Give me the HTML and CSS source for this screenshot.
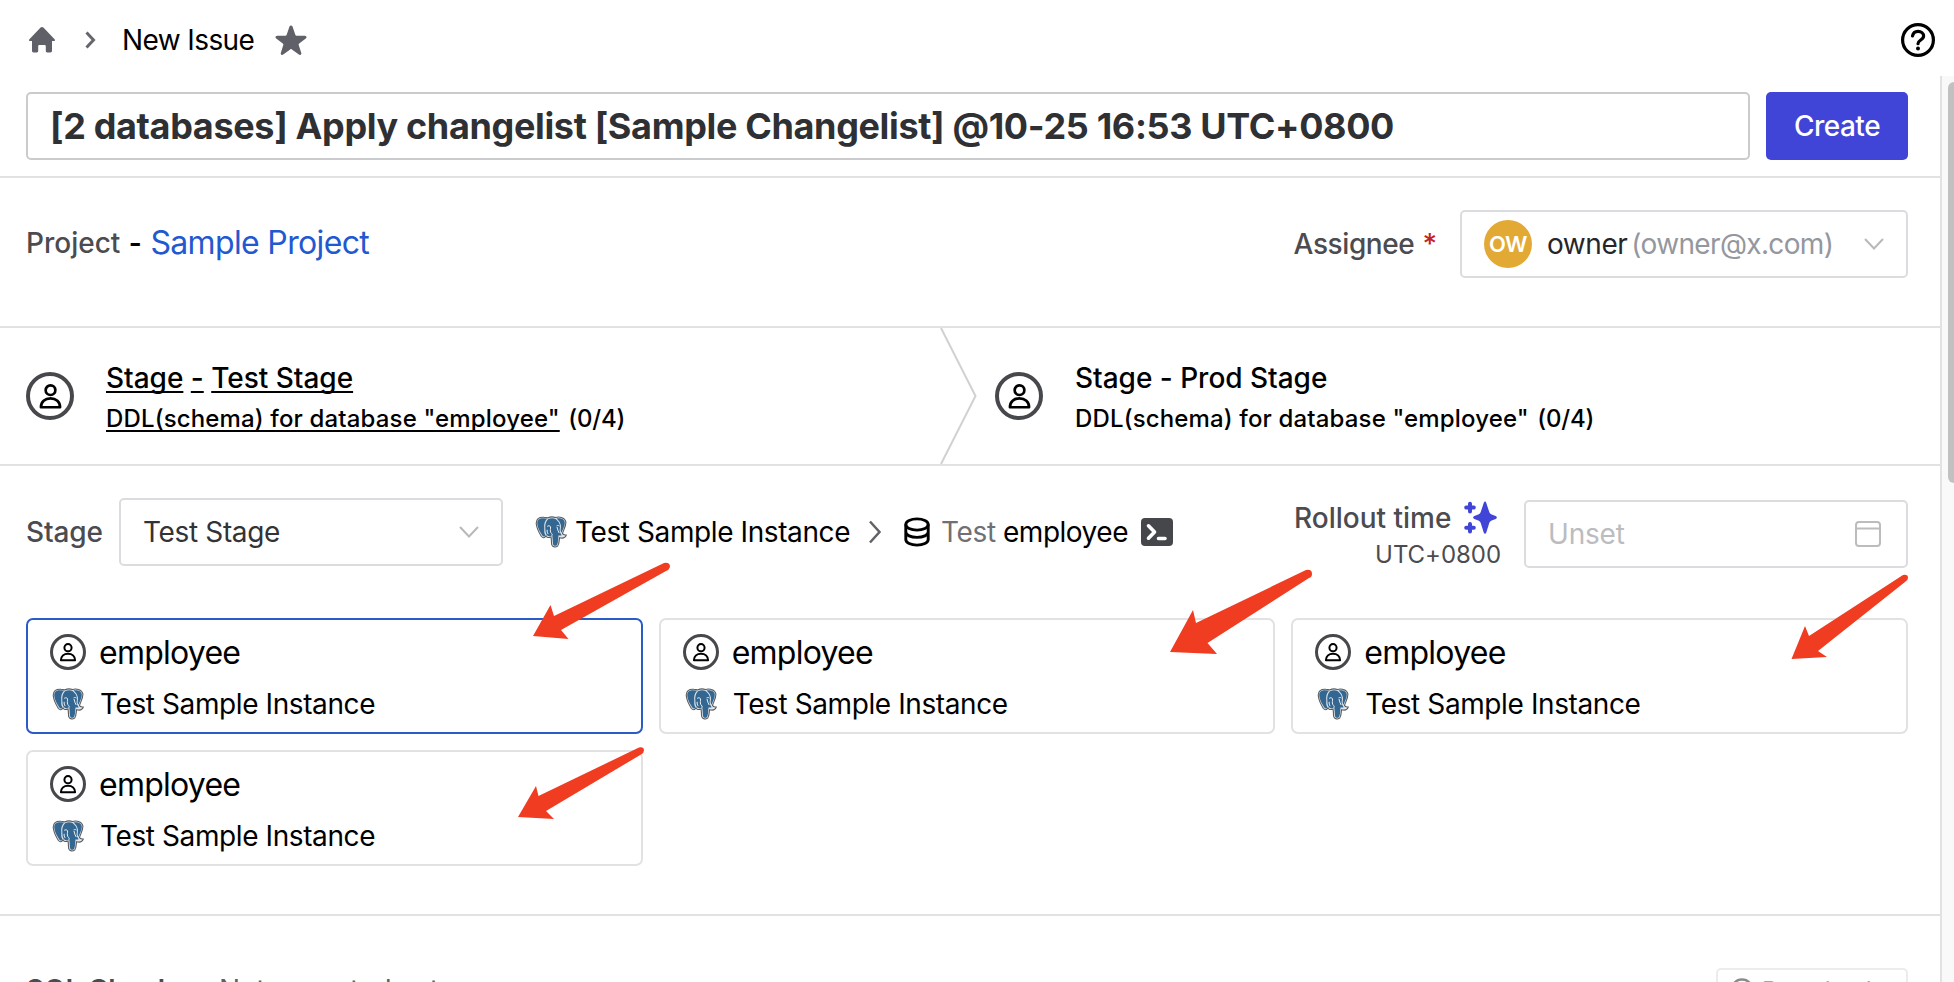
FILE: index.html
```
<!DOCTYPE html>
<html lang="en">
<head>
<meta charset="utf-8">
<title>New Issue</title>
<link rel="stylesheet" href="styles.css">
</head>
<body>
<svg class="defs" aria-hidden="true">
  <symbol id="user" viewBox="0 0 24 24">
    <circle cx="12" cy="6.800" r="4.300"/>
    <path d="M3.500 22c0-4.800 3.600-7.900 8.500-7.900s8.500 3.100 8.500 7.900z"/>
  </symbol>
  <symbol id="postgres" viewBox="0 0 32 32">
    <path d="M1.300 8C.8 3 4 .9 9 1.300c1.800.1 2.800.7 4 .5 2-1 5-1.200 7.500-.3C25 .2 30.200 2 30.900 6c.2 4-2.400 8-3.400 11.500.6 1.400 2.500 1.300 3.800 1.600-1 2.600-4 3.400-6.700 2.600-.5 2.300-.2 6.300-2 8.400-2 1.500-5.200 1-5.900-1.500-.4-2.500-.2-5.600-.7-7.600-2.500 1-4.500.5-5-1.200-1 2.200-3 2.700-4.600.7C3.900 16.500 1.800 12 1.300 8z" fill="#dfe5ea" stroke="#5a5c60" stroke-width="1.100"/>
    <path d="M2.300 8C1.800 3.400 5 2 9 2.300l3 .5C9.600 5.500 8.800 8.500 9.300 12c.2 2.600-.5 4.800 1 7-.6 1.900-1.900 1.900-2.800.7C4.900 15.900 2.800 12 2.300 8z" fill="#336791"/>
    <path d="M21.500 2.400c4-.8 7.900.7 8.300 3.900.2 3.700-2.100 7-3.300 10.500-1-1.600-1-2.800-.7-4.300.9-3.700-1.100-7.500-4.300-10.100z" fill="#336791"/>
    <path d="M13.300 3.100c2.200-1.100 4.800-1.200 6.800-.3 3.800 2.700 5.600 6.200 4.700 9.700-.5 2.300.2 4.600 1.900 6.700-1.200.6-2.200.4-3.200.2-.5 3.500-.1 7.400-1.700 9.900-1.400.9-3.200.6-3.700-1-.5-3.400-.3-7-1-9.400-1.500 1.500-3.500 2.100-5 .3-2-2.100-1.500-4.500-1.800-7-.4-3.600.7-7 3-9.100z" fill="#336791"/>
    <path d="M12.200 10.300c1.300-.8 2.800-.6 3.300.4.400 2-.8 3.700.3 5.800 1 1.200 1.500 1.700 1.500 2.800M21.600 9.900c1.100-.5 2.300-.4 2.900.2M22 11c.3 2.300 1.300 4.300 2.200 6.100M12.200 13.800c-.3 1.700.2 3 1 4.300" fill="none" stroke="#e8eef2" stroke-width="1"/>
  </symbol>
</svg>

<header class="topbar">
  <svg class="home" viewBox="0 0 28 28"><path d="M12.600 1.600a2 2 0 0 1 2.800 0L26.600 13.200c.8.9.4 1.900-.8 1.900H24v9.700c0 1-.6 1.700-1.600 1.700h-3.200c-.9 0-1.400-.5-1.400-1.400v-4.600c0-.9-.5-1.400-1.400-1.400h-4.800c-.9 0-1.400.5-1.400 1.400v4.600c0 .9-.5 1.400-1.400 1.400H5.600c-1 0-1.600-.7-1.600-1.700v-9.700H2.200c-1.200 0-1.600-1-.8-1.900z"/></svg>
  <svg class="crumb-arrow" viewBox="0 0 12 18"><path d="M2.500 1.500 9.500 9l-7 7.500"/></svg>
  <span class="crumb">New Issue</span>
  <svg class="star" viewBox="0 0 32 30"><path d="M14.500 1.500c.5-1.500 2.500-1.500 3 0l2.800 8.200c.2.600.7 1 1.400 1h8.200c1.600 0 2.200 2 .9 2.900l-6.600 4.800c-.5.400-.7 1-.5 1.600l2.600 7.900c.5 1.500-1.200 2.600-2.400 1.700l-7-5.200c-.5-.4-1.200-.4-1.700 0l-7 5.200c-1.200.9-2.900-.2-2.400-1.700L8.300 20c.2-.6 0-1.200-.5-1.600l-6.600-4.800c-1.300-.9-.7-2.900.9-2.900h8.200c.7 0 1.200-.4 1.400-1z"/></svg>
  <svg class="help" viewBox="0 0 36 36"><circle cx="18" cy="18" r="15.400"/><path d="M12.500 14c.5-2.900 2.700-4.700 5.500-4.700 3.100 0 5.600 2 5.600 4.800 0 4-5.600 3.800-5.600 7.600"/><circle class="dot" cx="18" cy="26.600" r="2"/></svg>
</header>

<div class="viewport">
  <main class="content">
    <section class="title-row">
      <div class="title-input">[2 databases] Apply changelist [Sample Changelist] @10-25 16:53 UTC+0800</div>
      <button class="create">Create</button>
    </section>

    <section class="project-row">
      <div class="project"><span class="label">Project</span><span class="dash">-</span><a class="project-link">Sample Project</a></div>
      <div class="assignee">
        <span class="label assignee-label">Assignee</span><span class="required">*</span>
        <div class="field assignee-select">
          <span class="avatar">OW</span><span class="owner">owner</span><span class="email">(owner@x.com)</span>
          <svg class="chevron" viewBox="0 0 20 12"><path d="m1 1 9 9.500L19 1"/></svg>
        </div>
      </div>
    </section>

    <section class="stages">
      <div class="stage">
        <span class="status large"><svg><use href="#user"/></svg></span>
        <div class="stage-text">
          <div class="stage-name"><u>Stage</u> <u>-</u> <u>Test Stage</u></div>
          <div class="stage-task"><u>DDL(schema) for database "employee"</u> <span class="count">(0/4)</span></div>
        </div>
      </div>
      <svg class="divider" viewBox="0 0 38 136"><path d="M1 0 35.500 68 1 136"/></svg>
      <div class="stage">
        <span class="status large"><svg><use href="#user"/></svg></span>
        <div class="stage-text">
          <div class="stage-name">Stage - Prod Stage</div>
          <div class="stage-task">DDL(schema) for database "employee" <span class="count">(0/4)</span></div>
        </div>
      </div>
    </section>

    <section class="tasks">
      <div class="filters">
        <span class="label stage-label">Stage</span>
        <div class="field stage-select"><span>Test Stage</span><svg class="chevron" viewBox="0 0 20 12"><path d="m1 1 9 9.500L19 1"/></svg></div>
        <svg class="pg"><use href="#postgres"/></svg>
        <span class="instance">Test Sample Instance</span>
        <svg class="path-arrow" viewBox="0 0 14 24"><path d="m2 1.500 9.500 10.500L2 22.500"/></svg>
        <svg class="database" viewBox="0 0 26 30"><ellipse cx="13" cy="7.500" rx="11.200" ry="5.600"/><path d="M1.800 7.500v15c0 3.100 5 5.600 11.200 5.600s11.200-2.500 11.200-5.600v-15M1.800 15c0 3.100 5 5.400 11.200 5.400s11.200-2.300 11.200-5.400"/></svg>
        <span class="env">Test</span><span class="dbname">employee</span>
        <svg class="terminal" viewBox="0 0 32 28"><rect width="32" height="28" rx="4"/><path d="m7.500 7.800 6 6.200-6 6.200M17.500 20.500h6.500"/></svg>
        <div class="rollout">
          <div class="rollout-title"><span>Rollout time</span><svg class="sparkle" viewBox="0 0 34 34"><path d="M20.800 1.700c.5-1.500 1.900-1.500 2.400 0l3 9.100c.5 1.400 1.200 2.100 2.500 2.600l4 1.700c1.600.7 1.600 2.100 0 2.800l-4 1.700c-1.300.5-2 1.200-2.500 2.600l-3 9.500c-.5 1.500-1.900 1.500-2.400 0l-3-9.500c-.5-1.400-1.200-2.100-2.500-2.600l-4-1.700c-1.600-.7-1.600-2.100 0-2.800l4-1.700c1.300-.5 2-1.200 2.500-2.600z"/><path class="plus" d="M7 2.800v7.600M3.200 6.600h7.600M7 23v7.600M3.200 26.800h7.600"/></svg></div>
          <div class="timezone">UTC+0800</div>
        </div>
        <div class="field date-input"><span>Unset</span><svg class="calendar" viewBox="0 0 26 26"><rect x="1" y="1" width="24" height="24" rx="3"/><path d="M1 7.500h24"/></svg></div>
      </div>

      <div class="cards">
        <article class="card active"><div class="card-line"><span class="status"><svg><use href="#user"/></svg></span><span class="card-name">employee</span></div><div class="card-line"><svg class="pg"><use href="#postgres"/></svg><span class="instance">Test Sample Instance</span></div></article>
        <article class="card"><div class="card-line"><span class="status"><svg><use href="#user"/></svg></span><span class="card-name">employee</span></div><div class="card-line"><svg class="pg"><use href="#postgres"/></svg><span class="instance">Test Sample Instance</span></div></article>
        <article class="card"><div class="card-line"><span class="status"><svg><use href="#user"/></svg></span><span class="card-name">employee</span></div><div class="card-line"><svg class="pg"><use href="#postgres"/></svg><span class="instance">Test Sample Instance</span></div></article>
        <article class="card"><div class="card-line"><span class="status"><svg><use href="#user"/></svg></span><span class="card-name">employee</span></div><div class="card-line"><svg class="pg"><use href="#postgres"/></svg><span class="instance">Test Sample Instance</span></div></article>
      </div>
    </section>

    <section class="checks">
      <span class="checks-label">SQL Checks</span><span class="checks-state">Not executed yet</span>
      <div class="run-button"><svg viewBox="0 0 24 24"><circle cx="12" cy="12" r="10.500"/><path d="m10 8 6 4-6 4z"/></svg><span>Run checks</span></div>
    </section>
  </main>
  <div class="scrollbar"><div class="thumb"></div></div>
</div>

<svg class="annotations" viewBox="0 0 1954 982">
  <path d="m533 636 17.500-31 3.500 11 110-53q6-1 6 4-1 3-4 4L561 630l7.500 9z"/>
  <path d="m1170 652 23-42 3 13 110-53q6-1 6 4 0 3-3 4l-101.500 65 9.500 11z"/>
  <path d="m1791.500 659 13.500-33 4 10 94-61q5-1 5 3 0 2-3 4l-87 69 9 6z"/>
  <path d="m518 817 18-31 2.500 10L639 747.500q5-1 5 3 0 2-3 4L546 811l8 8z"/>
</svg>
</body>
</html>
```
FILE: styles.css
```
* { box-sizing: border-box; }

body {
  position: relative;
  margin: 0;
  height: 982px;
  overflow: hidden;
  background: #fff;
  color: #000;
  font: 400 28px/40px Inter, "Liberation Sans", sans-serif;
}

svg { display: block; flex: none; }
.defs { position: absolute; width: 0; height: 0; }

.topbar { display: flex; align-items: center; height: 76px; padding: 4px 19px 0 28px; }
.home { width: 28px; height: 28px; fill: #606068; }
.crumb-arrow { width: 12px; height: 18px; margin-left: 28px; fill: none; stroke: #66666c; stroke-width: 3; }
.crumb { width: 134px; margin: 0 19px 0 26px; white-space: nowrap; letter-spacing: -.6px; }
.star { width: 32px; height: 30px; fill: #606068; }
.help { width: 36px; height: 36px; margin-left: auto; margin-right: -1px; fill: none; stroke: #000; stroke-width: 3.200; stroke-linecap: round; }
.help .dot { fill: #000; stroke: none; }

.viewport { display: flex; height: 906px; }
.content { width: 1942px; flex: none; border-right: 2px solid #e2e2e4; }
.scrollbar { flex: 1; padding: 6px 0 0 6px; background: #f9f9f9; }
.thumb { height: 401px; background: #c1c1c1; border-radius: 6px 0 0 6px; }

.title-row { display: flex; gap: 16px; height: 102px; padding: 16px 32px 0 26px; border-bottom: 2px solid #e2e2e4; }
.title-input {
  flex: 1; height: 68px; padding-left: 22px; border: 2px solid #cbcbcd; border-radius: 5px;
  color: #2f3033; font-size: 36px; font-weight: 700; line-height: 65px; letter-spacing: -.35px; white-space: nowrap;
}
.create {
  width: 142px; height: 68px; padding: 0; border: 0; border-radius: 5px; background: #4045d8;
  color: #fff; font: 500 28px/68px Inter, sans-serif; letter-spacing: -.5px;
}

.label { color: #4b4b50; font-weight: 500; }
.project-row { display: flex; justify-content: space-between; height: 150px; padding: 32px 32px 0 26px; border-bottom: 2px solid #e2e2e4; }
.project { display: flex; align-items: center; height: 66px; }
.dash { width: 14px; margin: 0 8px; font-weight: 600; text-align: center; }
.project-link { color: #2259d0; font-size: 32px; letter-spacing: -.65px; }
.assignee { display: flex; align-items: center; height: 68px; }
.assignee-label { letter-spacing: -.4px; }
.required { margin: 0 23px 0 8px; color: #c5221f; font-weight: 500; }
.field { display: flex; align-items: center; height: 68px; border: 2px solid #dcdce0; border-radius: 5px; }
.assignee-select { width: 448px; padding: 0 22px; }
.avatar {
  width: 48px; height: 48px; margin-right: 15px; border-radius: 50%; background: #e2aa35;
  color: #fff; font-size: 22px; font-weight: 600; line-height: 48px; text-align: center; letter-spacing: -.5px;
}
.owner { color: #26262a; letter-spacing: -.45px; }
.email { margin-left: 4px; color: #94979e; letter-spacing: -.66px; }
.chevron { width: 20px; height: 12px; margin-left: auto; fill: none; stroke: #b9b9bd; stroke-width: 2; }

.stages { display: flex; height: 138px; border-bottom: 2px solid #e2e2e4; }
.stage { display: flex; width: 940px; padding-left: 26px; }
.divider + .stage { padding-left: 17px; }
.divider { width: 38px; height: 136px; fill: none; stroke: #d1d1d4; stroke-width: 2; }
.status {
  display: flex; align-items: center; justify-content: center; flex: none;
  width: 36px; height: 36px; border: 3px solid #47484c; border-radius: 50%;
}
.status svg { width: 20px; height: 22px; fill: none; stroke: #000; stroke-width: 2.400; stroke-linejoin: round; }
.status.large { width: 48px; height: 48px; margin: 44px 32px 0 0; border-width: 4px; }
.status.large svg { width: 27px; height: 30px; }
.stage-text { padding-top: 30px; font-weight: 500; white-space: nowrap; }
.stage-name { letter-spacing: -.02px; }
.stage-task { padding-top: 1px; font-size: 24px; letter-spacing: .15px; }
.count { margin-left: 2px; letter-spacing: -.2px; }
u { text-decoration-thickness: 2px; text-underline-offset: 3px; text-decoration-skip-ink: none; }

.tasks { height: 450px; padding: 32px 32px 0 26px; border-bottom: 2px solid #e2e2e4; }
.filters { display: flex; align-items: center; height: 68px; white-space: nowrap; }
.stage-label { width: 77px; letter-spacing: -.1px; }
.stage-select { width: 384px; margin: 0 32px 0 16px; padding: 0 22px; color: #333336; letter-spacing: -.35px; }
.pg { width: 32px; height: 32px; }
.instance { letter-spacing: -.4px; }
.filters .instance { width: 276px; margin-left: 8px; }
.path-arrow { width: 14px; height: 24px; margin: 0 22px 0 17px; fill: none; stroke: #626267; stroke-width: 2.500; }
.database { width: 26px; height: 30px; fill: none; stroke: #000; stroke-width: 2.900; }
.env { width: 62px; margin-left: 11px; color: #707074; letter-spacing: -.3px; }
.dbname { width: 127px; letter-spacing: -.48px; }
.terminal { width: 32px; height: 28px; margin-left: 11px; fill: #46474b; }
.terminal path { fill: none; stroke: #fff; stroke-width: 3.600; stroke-linecap: round; stroke-linejoin: round; }
.rollout { display: flex; flex-direction: column; align-items: flex-end; width: 207px; margin-left: auto; margin-right: 23px; padding-top: 8px; }
.rollout-title { display: flex; align-items: center; justify-content: space-between; width: 100%; height: 36px; padding-right: 4px; color: #4b4b50; font-weight: 500; }
.sparkle { width: 34px; height: 34px; fill: #4045d8; }
.sparkle .plus { stroke: #4045d8; stroke-width: 4; stroke-linecap: round; }
.timezone { height: 36px; font-size: 24px; line-height: 38px; color: #4b4b50; letter-spacing: -.05px; }
.date-input { position: relative; top: 2px; width: 384px; padding: 0 25px 0 22px; color: #bcbcbf; letter-spacing: -.2px; }
.calendar { width: 26px; height: 26px; margin-left: auto; fill: none; stroke: #bcbcbf; stroke-width: 2; }

.cards { display: grid; grid-template-columns: repeat(3, 1fr); gap: 16px; margin-top: 52px; }
.card { height: 116px; padding: 12px 22px 0; border: 2px solid #e2e2e5; border-radius: 7px; }
.card.active { border-color: #2a5bc7; }
.card-line { display: flex; align-items: center; height: 40px; }
.card-line + .card-line { margin-top: 12px; }
.card .pg { margin: 0 16px 0 2px; }
.card .status { margin-right: 13px; }
.card-name { padding-top: 2px; font-size: 32px; letter-spacing: -.75px; }

.checks { display: flex; align-items: flex-start; height: 66px; padding: 52px 32px 0 26px; overflow: hidden; }
.checks-label { width: 193px; margin-top: 2px; color: #4b4b50; font-weight: 600; letter-spacing: -.2px; }
.checks-state { margin-top: 2px; color: #5f5f64; letter-spacing: -.35px; }
.run-button {
  display: flex; align-items: center; gap: 8px; width: 192px; height: 44px; margin-left: auto; padding-left: 12px;
  border: 2px solid #ececee; border-radius: 5px; color: #a4a4a8; font-size: 24px; letter-spacing: -.3px; white-space: nowrap;
}
.run-button span { padding-top: 1px; }
.run-button svg { width: 24px; height: 24px; fill: none; stroke: #8a8a8e; stroke-width: 2.400; }

.annotations { position: absolute; inset: 0; width: 1954px; height: 982px; pointer-events: none; fill: #f03c20; }
```
